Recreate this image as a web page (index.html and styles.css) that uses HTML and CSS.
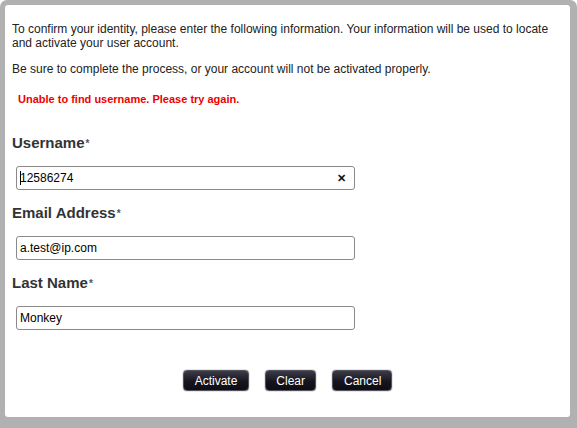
FILE: index.html
```html
<!DOCTYPE html>
<html>
<head>
<meta charset="utf-8">
<link rel="stylesheet" href="styles.css">
</head>
<body>
<div class="frame">
  <div class="panel">
    <p class="intro">To confirm your identity, please enter the following information. Your information will be used to locate and activate your user account.</p>
    <p class="intro second">Be sure to complete the process, or your account will not be activated properly.</p>
    <p class="error">Unable to find username. Please try again.</p>

    <div class="group">
      <div class="label">Username<span class="req">*</span></div>
      <div class="field"><span class="value"><span class="caret"></span>12586274</span><span class="clear-x">✕</span></div>
    </div>
    <div class="group">
      <div class="label">Email Address<span class="req">*</span></div>
      <div class="field"><span class="value">a.test@ip.com</span></div>
    </div>
    <div class="group">
      <div class="label">Last Name<span class="req">*</span></div>
      <div class="field"><span class="value">Monkey</span></div>
    </div>

    <div class="actions">
      <button class="btn btn-wide">Activate</button>
      <button class="btn">Clear</button>
      <button class="btn btn-cancel">Cancel</button>
    </div>
  </div>
</div>
</body>
</html>
```

FILE: styles.css
```css
html, body {
  margin: 0;
  padding: 0;
  background: #ffffff;
}

.frame {
  width: 577px;
  height: 428px;
  box-sizing: border-box;
  padding: 5px 7px 11px 5px;
  background: #b1b1b1;
  border-radius: 7px 7px 0 0;
  display: flex;
}

.panel {
  flex: 1;
  background: #ffffff;
  border-radius: 3px;
  padding: 17px 7px 0 7px;
  font-family: "Liberation Sans", Arial, sans-serif;
  color: #222;
}

.intro {
  margin: 0;
  font-size: 12px;
  line-height: 14px;
}

.intro.second {
  margin-top: 12px;
}

.error {
  margin: 17px 0 0 6px;
  font-size: 11px;
  line-height: 13px;
  font-weight: bold;
  color: #ee0000;
}

.group {
  margin-top: 14px;
}

.group:first-of-type {
  margin-top: 28px;
}

.label {
  font-size: 15px;
  line-height: 18px;
  height: 18px;
  font-weight: bold;
  color: #333;
}

.req {
  font-size: 10px;
  line-height: 0;
  vertical-align: 1px;
  margin-left: 1px;
  color: #555;
}

.field {
  margin: 14px 0 0 4px;
  width: 339px;
  height: 24px;
  box-sizing: border-box;
  border: 1px solid #8a8a8a;
  border-radius: 3px;
  display: flex;
  align-items: center;
  justify-content: space-between;
  padding: 0 8px 0 3px;
  font-size: 12px;
  color: #000;
}

.value {
  display: flex;
  align-items: center;
}

.caret {
  width: 1px;
  height: 14px;
  background: #000;
  margin-right: -1px;
}

.clear-x {
  font-size: 11px;
  font-weight: bold;
  color: #111;
}

.actions {
  margin-top: 40px;
  display: flex;
  justify-content: center;
  gap: 16px;
}

.btn {
  height: 21px;
  padding: 0 10px;
  font-family: "Liberation Sans", Arial, sans-serif;
  font-size: 12px;
  color: #ffffff;
  background: linear-gradient(#3b3a48, #16151f 55%, #0e0d15);
  border: 1px solid #55545e;
  border-radius: 4px;
  box-shadow: 0 0 1px #000;
  cursor: pointer;
}

.btn-wide {
  padding: 0 11px;
}

.btn-cancel {
  padding: 0 10px 0 11px;
}
```
